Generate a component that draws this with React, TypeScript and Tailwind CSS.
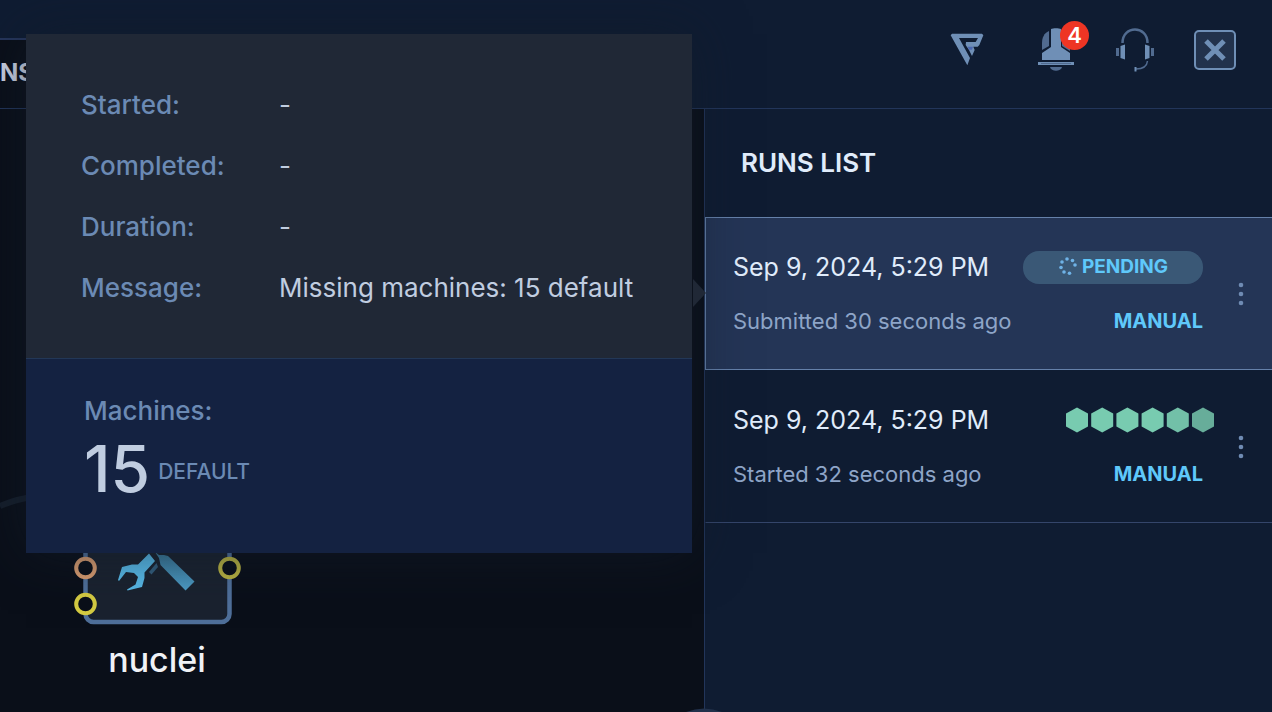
import React from "react";

function BrandIcon() {
  return (
    <svg viewBox="60 96 102 102" className="h-[34px] w-[34px]" aria-hidden="true">
      <path
        d="M66 101 H156 L160 106 L148 135 L143 140 H130 L134 150 L126 168 L117 150 L107 135 L108 126 H137 L144 114 H87 L120 174 L112 196 L62 106 Z"
        fill="#6f8fb6"
      />
      <path d="M113 140 H129 L126 149 H117 Z" fill="#4a66b0" />
    </svg>
  );
}

function BellIcon() {
  return (
    <svg viewBox="0 0 36 43" className="h-[43px] w-9" aria-hidden="true">
      <path d="M11 3 C6 5 4 10 4 15 V22 L11 18 Z" fill="#516b90" />
      <path d="M24 3 C30 5 32 10 32 15 V23 L24 18 Z" fill="#516b90" />
      <path d="M13 1 C15 0 21 0 23 1 V19 L32 25 V32 H4 V25 L13 19 Z" fill="#6f8fb6" />
      <path d="M0 34 H36 V37 H0 Z" fill="#6f8fb6" />
      <path d="M3 35.500 H33" stroke="#516b90" strokeWidth="1" />
      <path d="M12 39 H24 C23 44 13 44 12 39 Z" fill="#516b90" />
    </svg>
  );
}

function HeadsetIcon() {
  return (
    <svg viewBox="0 0 38 44" className="h-11 w-[38px]" aria-hidden="true">
      <path d="M6.500 15 C6.500 -3 31.500 -3 31.500 15" fill="none" stroke="#516b90" strokeWidth="2.500" />
      <path d="M4.500 18 L9 16.500 V31.500 L4.500 30 Z M33.500 18 L29 16.500 V31.500 L33.500 30 Z" fill="#6f8fb6" />
      <path d="M0 20 H3 V28 H0 Z M35 20 H38 V28 H35 Z" fill="#516b90" />
      <path d="M31.500 33 C31 38 27 41 20 41" fill="none" stroke="#516b90" strokeWidth="1.500" />
      <path d="M18.500 39 H20.500 V43.500 H18.500 Z" fill="#6f8fb6" />
    </svg>
  );
}

function CloseIcon() {
  return (
    <svg viewBox="0 0 42 40" className="h-10 w-[42px]" aria-hidden="true">
      <rect x="1" y="1" width="40" height="38" rx="4" fill="#22324c" stroke="#6f8fb6" strokeWidth="2" />
      <path d="M12 11 L30 29 M30 11 L12 29" stroke="#6f8fb6" strokeWidth="5" />
    </svg>
  );
}

function SpinnerIcon() {
  const dots = [
    [9, 2], [14.5, 3.5], [17, 8], [11.500, 16.2], [6, 15], [3, 10.500], [4, 5],
  ];
  return (
    <svg viewBox="0 0 20 20" className="h-5 w-5" aria-hidden="true">
      {dots.map(([x, y]) => (
        <circle key={`${x}-${y}`} cx={x} cy={y} r="1.800" fill="#6fb2e6" />
      ))}
    </svg>
  );
}

function Hexagons() {
  const shades = ["#78cbb0", "#78cbb0", "#78cbb0", "#78cbb0", "#72c0a8", "#67ad9a"];
  return (
    <svg viewBox="0 0 150 26" className="-mr-3 h-[26px] w-[150px] shrink-0" role="img" aria-label="Running">
      {shades.map((fill, i) => (
        <path
          key={i}
          transform={`translate(${i * 25.2} 0)`}
          d="M12 0.500 L23 6.500 V19.500 L12 25.500 L1 19.500 V6.500 Z"
          fill={fill}
        />
      ))}
    </svg>
  );
}

function Kebab() {
  return (
    <button type="button" aria-label="Run actions" className="ml-[7px] flex w-[62px] shrink-0 items-center justify-center self-stretch">
      <svg viewBox="0 0 6 24" className="h-6 w-1.5" aria-hidden="true">
        <circle cx="3" cy="3" r="2.300" fill="#6f8bb3" />
        <circle cx="3" cy="12" r="2.300" fill="#6f8bb3" />
        <circle cx="3" cy="21" r="2.300" fill="#6f8bb3" />
      </svg>
    </button>
  );
}

function RunRow({ date, note, status }: { date: string; note: string; status: React.ReactNode }) {
  return (
    <div className="flex">
      <div className="flex min-w-0 flex-1 flex-col gap-[22px] pt-[33px] pb-8 pl-[27px]">
        <div className="flex h-8 items-center justify-between">
          <span className="text-[25px] leading-8 whitespace-nowrap text-[#e0ecfb]">{date}</span>
          {status}
        </div>
        <div className="flex h-8 items-center justify-between">
          <span className="text-[22px] leading-8 whitespace-nowrap text-[#8ea5c8]">{note}</span>
          <span className="text-xl leading-8 font-bold text-[#5fc8fa]">MANUAL</span>
        </div>
      </div>
      <Kebab />
    </div>
  );
}

const details = [
  ["Started:", "-"],
  ["Completed:", "-"],
  ["Duration:", "-"],
  ["Message:", "Missing machines: 15 default"],
];

function RunPopover() {
  return (
    <div className="absolute -top-[184px] right-full z-10 mr-3.5 w-[666px] shadow-[0_0_50px_rgba(18,28,42,0.6)]">
      <dl className="grid grid-cols-[198px_1fr] gap-y-[29px] border-b border-[#223757] bg-[#202836] pt-[55px] pb-[54px] pl-[55px] text-[26px] leading-8">
        {details.map(([label, value]) => (
          <React.Fragment key={label}>
            <dt className="font-medium text-[#6b8ab4]">{label}</dt>
            <dd className="whitespace-nowrap text-[#c0cde0]">{value}</dd>
          </React.Fragment>
        ))}
      </dl>
      <div className="bg-[#142241] pt-9 pb-[52px] pl-[58px]">
        <p className="text-[26px] leading-8 font-medium text-[#6b8ab4]">Machines:</p>
        <p className="mt-2.5 flex items-center gap-2">
          <span className="text-[64px] leading-[64px] font-medium text-[#c0cde0]">15</span>
          <span className="pt-1.5 text-[21px] font-medium text-[#6b8ab4]">DEFAULT</span>
        </p>
      </div>
      <svg viewBox="0 0 14 28" className="absolute top-[245px] left-full h-7 w-3.5" aria-hidden="true">
        <path d="M1 0 L14 14 L1 28 Z" fill="#202836" />
      </svg>
    </div>
  );
}

function ToolNode() {
  return (
    <div className="absolute top-[367px] left-[70px] flex w-[174px] flex-col items-center">
      <svg viewBox="70 476 174 150" className="h-[150px] w-[174px]" role="img" aria-label="Tool node">
        <defs>
          <linearGradient id="steel" x1="0" y1="0" x2="0" y2="1">
            <stop offset="0" stopColor="#397595" />
            <stop offset="1" stopColor="#4d9cc6" />
          </linearGradient>
        </defs>
        <rect x="85.500" y="478" width="144" height="144" rx="8" fill="#1a222f" stroke="#4f6f99" strokeWidth="4.500" />
        <path d="M122 567 L132 564.500 L138 564.500 L149 553.500 L155 561 L144.500 572.500 L144.500 578 L142 587 L127.500 590.500 L127 589.500 L135.500 584.500 L138 577 L134 573 L126 572 L119 581 L118 580 Z" fill="#57b8e6" />
        <path d="M149 572 L156.500 563 L158 567 L151.500 574.500 Z" fill="#335d7c" />
        <path d="M155 552 L159 555 L164 555 L168 556 L194.500 581.500 L185.500 590.500 L160.500 565 L159 558 Z" fill="url(#steel)" />
        <circle cx="85.500" cy="568" r="9.300" fill="#0a0f19" stroke="#d89c70" strokeWidth="4" />
        <circle cx="85.500" cy="604" r="9.300" fill="#0a0f19" stroke="#d4cb42" strokeWidth="4" />
        <circle cx="229.500" cy="568" r="9.300" fill="#0a0f19" stroke="#b9b342" strokeWidth="4" />
      </svg>
      <span className="mt-3.5 text-[34px] leading-10 font-medium text-[#f0f2f6]">nuclei</span>
    </div>
  );
}

export default function App() {
  return (
    <div className="flex min-h-screen flex-col overflow-hidden bg-[#0a0f19] font-['Inter','Noto_Sans',sans-serif]">
      <header className="flex h-[109px] shrink-0 justify-between border-b border-[#22355a] bg-[#0f1c32]">
        <div className="flex w-40 flex-col pt-[38px]">
          <div className="flex flex-1 items-center border-t-2 border-[#26365c] bg-[#0a0f19] pb-0.5 text-2xl font-bold text-[#d0d7e8]">
            NS
          </div>
        </div>
        <nav className="flex items-start pt-7 pr-9" aria-label="Main">
          <button type="button" aria-label="Home" className="mt-1 mr-[54px]">
            <BrandIcon />
          </button>
          <button type="button" aria-label="Notifications" className="relative mr-[42px]">
            <BellIcon />
            <span className="absolute -top-[7px] left-[22px] flex h-[29px] w-[29px] items-center justify-center rounded-full bg-[#ee3524] text-[22px] font-semibold text-white">
              4
            </span>
          </button>
          <button type="button" aria-label="Support" className="mr-10">
            <HeadsetIcon />
          </button>
          <button type="button" aria-label="Close" className="mt-0.5">
            <CloseIcon />
          </button>
        </nav>
      </header>

      <main className="flex flex-1">
        <section className="relative min-w-0 flex-1" aria-label="Workflow">
          <svg viewBox="0 0 40 20" className="absolute top-[383px] left-0 h-5 w-10" aria-hidden="true">
            <path d="M0 14 C10 10 20 6 40 4" fill="none" stroke="#151e2b" strokeWidth="6" />
          </svg>
          <ToolNode />
          <svg viewBox="0 0 40 4" className="absolute -right-5 bottom-0 h-1 w-10" aria-hidden="true">
            <path d="M2 4 Q20 -3 38 4 Z" fill="#22314b" />
          </svg>
        </section>

        <aside className="w-[568px] shrink-0 border-l border-[#22355a] bg-[#0f1c32]">
          <h2 className="py-[38px] pl-9 text-[26px] leading-8 font-semibold text-[#e0ecfb]">RUNS LIST</h2>
          <ul>
            <li className="relative border-y border-l border-[#6581aa] bg-[#243556]">
              <RunRow
                date="Sep 9, 2024, 5:29 PM"
                note="Submitted 30 seconds ago"
                status={
                  <span className="flex h-[33px] w-[180px] items-center justify-center gap-1 rounded-2xl bg-[#3a5876] text-[19px] font-bold text-[#5fc8fa]">
                    <SpinnerIcon />
                    PENDING
                  </span>
                }
              />
              <RunPopover />
            </li>
            <li className="border-y border-l border-t-transparent border-b-[#34456a] border-l-transparent">
              <RunRow date="Sep 9, 2024, 5:29 PM" note="Started 32 seconds ago" status={<Hexagons />} />
            </li>
          </ul>
        </aside>
      </main>
    </div>
  );
}
